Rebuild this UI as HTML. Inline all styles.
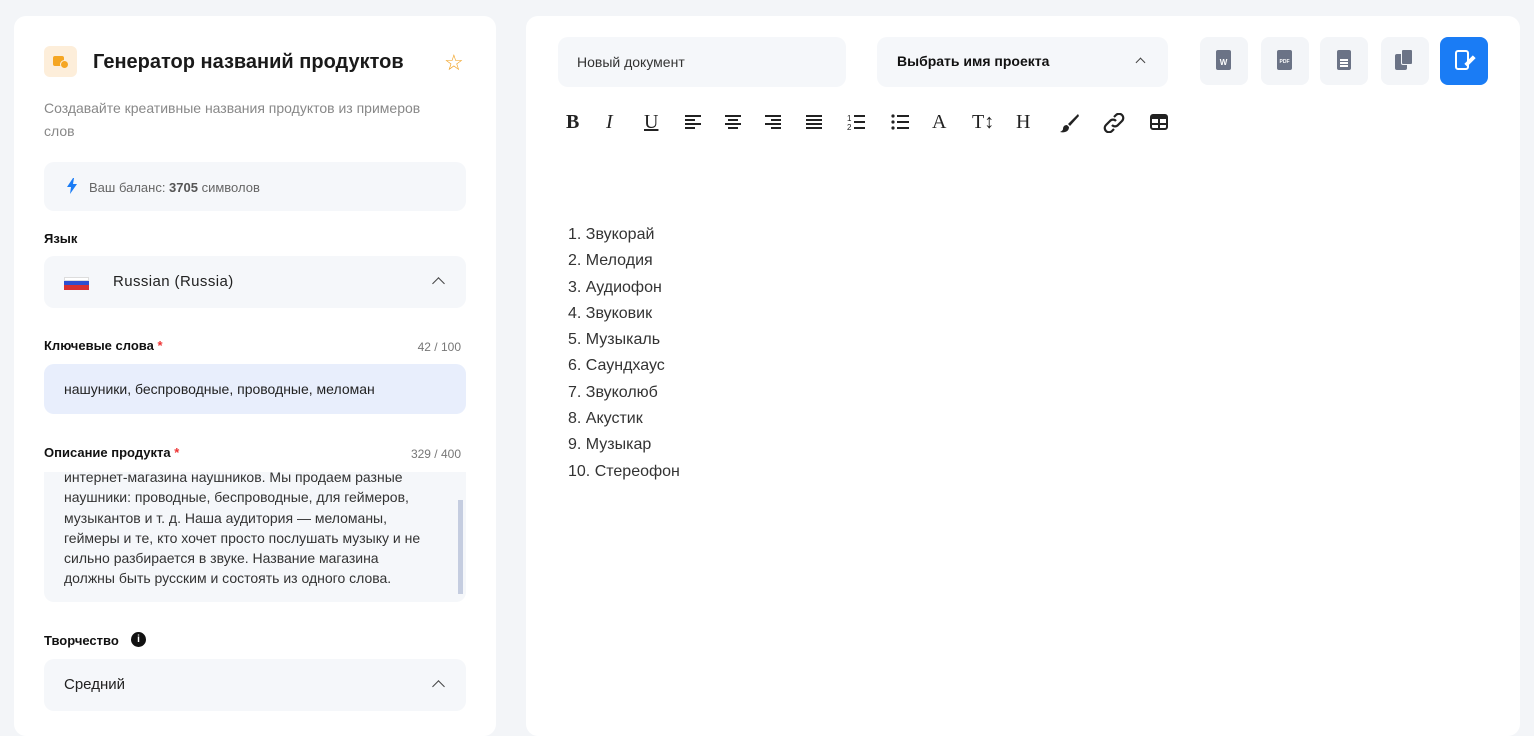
<!DOCTYPE html>
<html><head><meta charset="utf-8"><style>
*{box-sizing:border-box;margin:0;padding:0}
body{width:1534px;height:723px;overflow:hidden;background:#f3f5f8;font-family:"Liberation Sans",sans-serif;position:relative}
.card{position:absolute;background:#fff;border-radius:12px}
.abs{position:absolute}
.box{position:absolute;background:#f5f7fa;border-radius:10px}
.lbl{position:absolute;font-size:13px;font-weight:bold;color:#111}
.cnt{position:absolute;font-size:12px;color:#777;right:0}
.chev{position:absolute;width:9px;height:9px;border-left:1.6px solid #444;border-top:1.6px solid #444;transform:rotate(45deg)}
.tb{position:absolute;top:111px;font-family:"Liberation Serif",serif;font-size:20px;color:#222;line-height:22px}
.sv{position:absolute;top:113px}
.ib{position:absolute;top:37px;width:48px;height:48px;background:#f3f5f8;border-radius:8px}
</style></head><body>
<div class="card" style="left:14px;top:16px;width:482px;height:720px">
  <div class="abs" style="left:30px;top:30px;width:33px;height:31px;background:#fdeeda;border-radius:6px">
    <div class="abs" style="left:9px;top:10px;width:11px;height:10px;background:#f5a623;border-radius:2px"></div>
    <div class="abs" style="left:16px;top:14px;width:9px;height:9px;background:#f5a623;border-radius:50%;border:1.5px solid #fdeeda"></div>
  </div>
  <div class="abs" style="left:79px;top:35px;font-size:20px;font-weight:bold;color:#1a1a1a">Генератор названий продуктов</div>
  <div class="abs" style="left:430px;top:34px;font-size:22px;color:#f0a020">☆</div>
  <div class="abs" style="left:30px;top:81px;width:410px;font-size:14px;line-height:23px;color:#888">Создавайте креативные названия продуктов из примеров слов</div>
  <div class="box" style="left:30px;top:146px;width:422px;height:49px">
    <svg class="abs" style="left:22px;top:16px" width="12" height="16" viewBox="0 0 12 16"><path d="M7 0L1 9h4l-1 7 7-10H7l1-6z" fill="#1a7cf5"/></svg>
    <div class="abs" style="left:45px;top:18px;font-size:13px;color:#666">Ваш баланс: <b style="color:#555">3705</b> символов</div>
  </div>
  <div class="lbl" style="left:30px;top:215px">Язык</div>
  <div class="box" style="left:30px;top:240px;width:422px;height:52px">
    <div class="abs" style="left:20px;top:21px;width:25px;height:4px;background:#fff;border:0.5px solid #ddd"></div>
    <div class="abs" style="left:20px;top:25px;width:25px;height:4px;background:#2c4fd0"></div>
    <div class="abs" style="left:20px;top:29px;width:25px;height:5px;background:#d63030"></div>
    <div class="abs" style="left:69px;top:17px;font-size:15px;color:#222;letter-spacing:0.4px">Russian (Russia)</div>
    <div class="chev" style="left:390px;top:23px"></div>
  </div>
  <div class="lbl" style="left:30px;top:322px">Ключевые слова<span style="color:#e33"> *</span></div>
  <div class="cnt" style="right:35px;top:324px">42 / 100</div>
  <div class="box" style="left:30px;top:348px;width:422px;height:50px;background:#e8eefc">
    <div class="abs" style="left:20px;top:17px;font-size:14px;color:#222">нашуники, беспроводные, проводные, меломан</div>
  </div>
  <div class="lbl" style="left:30px;top:429px">Описание продукта<span style="color:#e33"> *</span></div>
  <div class="cnt" style="right:35px;top:431px">329 / 400</div>
  <div class="box" style="left:30px;top:456px;width:422px;height:130px;border-radius:0 0 10px 10px;overflow:hidden">
    <div class="abs" style="left:20px;top:-5px;width:368px;font-size:14px;line-height:20.3px;color:#333">интернет-магазина наушников. Мы продаем разные наушники: проводные, беспроводные, для геймеров, музыкантов и т. д. Наша аудитория — меломаны, геймеры и те, кто хочет просто послушать музыку и не сильно разбирается в звуке. Название магазина должны быть русским и состоять из одного слова.</div>
    <div class="abs" style="left:414px;top:28px;width:5px;height:94px;background:#c5cde0"></div>
  </div>
  <div class="lbl" style="left:30px;top:617px">Творчество</div>
  <div class="abs" style="left:117px;top:616px;width:15px;height:15px;border-radius:50%;background:#111;color:#fff;font-size:10px;font-weight:bold;text-align:center;line-height:15px">i</div>
  <div class="box" style="left:30px;top:643px;width:422px;height:52px">
    <div class="abs" style="left:20px;top:17px;font-size:15px;color:#222">Средний</div>
    <div class="chev" style="left:390px;top:23px"></div>
  </div>
</div>
<div class="card" style="left:526px;top:16px;width:994px;height:720px"></div>
<div class="box" style="left:558px;top:37px;width:288px;height:50px"><div class="abs" style="left:19px;top:17px;font-size:14px;color:#333">Новый документ</div></div>
<div class="box" style="left:877px;top:37px;width:291px;height:50px"><div class="abs" style="left:20px;top:16px;font-size:14px;font-weight:bold;color:#111">Выбрать имя проекта</div><div class="chev" style="left:260px;top:22px;width:7px;height:7px"></div></div>
<div class="ib" style="left:1200px"><div class="abs" style="left:16px;top:13px;width:15px;height:20px;background:#6b7386;border-radius:2px;color:#fff;font-size:8px;font-weight:bold;text-align:center;line-height:26px">W</div></div>
<div class="ib" style="left:1261px"><div class="abs" style="left:16px;top:13px;width:15px;height:20px;background:#6b7386;border-radius:2px;color:#fff;font-size:5px;font-weight:bold;text-align:center;line-height:24px">PDF</div></div>
<div class="ib" style="left:1320px"><div class="abs" style="left:17px;top:13px;width:14px;height:20px;background:#6b7386;border-radius:2px"><div class="abs" style="left:3px;top:9px;width:8px;height:1.5px;background:#fff;box-shadow:0 3px #fff,0 6px #fff"></div></div></div>
<div class="ib" style="left:1381px"><div class="abs" style="left:14px;top:17px;width:12px;height:16px;background:#6b7386;border-radius:2px"></div><div class="abs" style="left:20px;top:12px;width:12px;height:16px;background:#6b7386;border-radius:2px;border:1.5px solid #f3f5f8"></div></div>
<div class="ib" style="left:1440px;background:#1a7cf5"><div class="abs" style="left:15px;top:13px;width:14px;height:20px;border:2.5px solid #fff;border-radius:3px"></div><div class="abs" style="left:24px;top:22px;width:12px;height:4px;background:#fff;transform:rotate(-45deg)"></div></div>
<div class="tb" style="left:566px;font-weight:bold">B</div>
<div class="tb" style="left:606px;font-style:italic">I</div>
<div class="tb" style="left:644px;text-decoration:underline">U</div>
<svg class="sv" style="left:684px" width="18" height="18" viewBox="0 0 18 18" stroke="#222" stroke-width="2"><path d="M1 3h16M1 7h10M1 11h16M1 15h10"/></svg>
<svg class="sv" style="left:724px" width="18" height="18" viewBox="0 0 18 18" stroke="#222" stroke-width="2"><path d="M1 3h16M4 7h10M1 11h16M4 15h10"/></svg>
<svg class="sv" style="left:764px" width="18" height="18" viewBox="0 0 18 18" stroke="#222" stroke-width="2"><path d="M1 3h16M7 7h10M1 11h16M7 15h10"/></svg>
<svg class="sv" style="left:805px" width="18" height="18" viewBox="0 0 18 18" stroke="#222" stroke-width="2"><path d="M1 3h16M1 7h16M1 11h16M1 15h16"/></svg>
<svg class="sv" style="left:847px" width="19" height="18" viewBox="0 0 19 18"><text x="0" y="8" font-size="8" font-family="Liberation Sans" fill="#222">1</text><text x="0" y="17" font-size="8" font-family="Liberation Sans" fill="#222">2</text><path d="M7 3h11M7 9h11M7 15h11" stroke="#222" stroke-width="2"/></svg>
<svg class="sv" style="left:891px" width="19" height="18" viewBox="0 0 19 18"><circle cx="2" cy="3" r="1.6" fill="#222"/><circle cx="2" cy="9" r="1.6" fill="#222"/><circle cx="2" cy="15" r="1.6" fill="#222"/><path d="M6 3h12M6 9h12M6 15h12" stroke="#222" stroke-width="2"/></svg>
<div class="tb" style="left:932px">A</div>
<div class="tb" style="left:972px">T↕</div>
<div class="tb" style="left:1016px">H</div>
<svg class="sv" style="left:1059px" width="20" height="20" viewBox="0 0 20 20"><path d="M19 1L9 11l2 2L20 3z" fill="#222"/><path d="M8 12c-3 0-4 2-4 4 0 1-1 2-3 3 4 1 9 0 9-5z" fill="#222"/></svg>
<svg class="sv" style="left:1103px" width="22" height="20" viewBox="0 0 22 20" fill="none" stroke="#222" stroke-width="2.2"><path d="M9 12a4 4 0 0 0 6 0l4-4a4 4 0 0 0-6-6l-2 2"/><path d="M13 8a4 4 0 0 0-6 0l-4 4a4 4 0 0 0 6 6l2-2"/></svg>
<svg class="sv" style="left:1150px;top:114px" width="18" height="16" viewBox="0 0 18 16"><rect x="1" y="1" width="16" height="14" rx="2" fill="none" stroke="#222" stroke-width="2"/><rect x="1" y="1" width="16" height="4" fill="#222"/><path d="M1 10h16M9 5v10" stroke="#222" stroke-width="2"/></svg>
<div class="abs" style="left:568px;top:222px;font-size:16px;line-height:26.3px;color:#333">
1. Звукорай<br>2. Мелодия<br>3. Аудиофон<br>4. Звуковик<br>5. Музыкаль<br>6. Саундхаус<br>7. Звуколюб<br>8. Акустик<br>9. Музыкар<br>10. Стереофон
</div>
</body></html>
